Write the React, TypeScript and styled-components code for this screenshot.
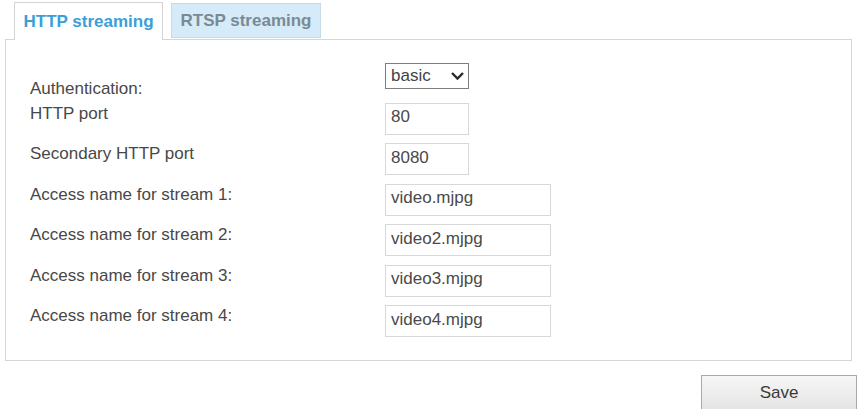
import React from 'react';

import styled, { createGlobalStyle } from 'styled-components';

const GlobalStyle = createGlobalStyle`
  html, body {
    margin: 0;
    padding: 0;
    background: #ffffff;
  }
  body {
    font-family: "Liberation Sans", Arial, sans-serif;
    color: #3a3a3a;
  }
`;

type Field = {
  label: string;
  value: string;
  wide?: boolean;
};

const fields: Field[] = [
  { label: 'HTTP port', value: '80' },
  { label: 'Secondary HTTP port', value: '8080' },
  { label: 'Access name for stream 1:', value: 'video.mjpg', wide: true },
  { label: 'Access name for stream 2:', value: 'video2.mjpg', wide: true },
  { label: 'Access name for stream 3:', value: 'video3.mjpg', wide: true },
  { label: 'Access name for stream 4:', value: 'video4.mjpg', wide: true },
];

const App = () => {
  return (
    <Page>
      <GlobalStyle />
      <TabBar>
        <Tab $active>HTTP streaming</Tab>
        <Tab>RTSP streaming</Tab>
      </TabBar>
      <Panel>
        <Row $first>
          <Label $shift={17}>Authentication:</Label>
          <SelectBox>
            <span>basic</span>
            <Chevron viewBox="0 0 14 10" aria-hidden="true">
              <path d="M1.5 2 L7 7.5 L12.5 2" />
            </Chevron>
          </SelectBox>
        </Row>
        {fields.map((field) => (
          <Row key={field.label}>
            <Label>{field.label}</Label>
            <TextInput readOnly defaultValue={field.value} $wide={field.wide} />
          </Row>
        ))}
      </Panel>
      <Footer>
        <SaveButton type="button">Save</SaveButton>
      </Footer>
    </Page>
  );
};

const Page = styled.div`
  padding: 2px 7px 0 5px;
  width: 859px;
  box-sizing: border-box;
`;

const TabBar = styled.div`
  display: flex;
  align-items: flex-start;
  gap: 8px;
  margin-left: 9px;
  position: relative;
  z-index: 1;
  margin-bottom: -1px;
`;

const Tab = styled.div<{ $active?: boolean }>`
  box-sizing: border-box;
  width: ${(props) => (props.$active ? '149px' : '150px')};
  height: ${(props) => (props.$active ? '38px' : '35px')};
  margin-top: ${(props) => (props.$active ? '0' : '1px')};
  display: flex;
  align-items: center;
  justify-content: center;
  font-size: 17px;
  font-weight: bold;
  color: ${(props) => (props.$active ? '#3a9fd8' : '#7a8a94')};
  background: ${(props) => (props.$active ? '#ffffff' : '#d6ebf9')};
  border: 1px solid ${(props) => (props.$active ? '#d4d4d4' : '#c6dbe8')};
  border-bottom: ${(props) => (props.$active ? 'none' : '1px solid #c6dbe8')};
`;

const Panel = styled.div`
  box-sizing: border-box;
  border: 1px solid #d6d6d6;
  padding: 22px 0 23px 24px;
  height: 322px;
`;

const Row = styled.div<{ $first?: boolean }>`
  display: flex;
  align-items: flex-start;
  height: ${(props) => (props.$first ? '40.5px' : '32px')};
  margin-bottom: ${(props) => (props.$first ? '0' : '8.5px')};
`;

const Label = styled.div<{ $shift?: number }>`
  width: 355px;
  flex-shrink: 0;
  font-size: 17px;
  line-height: 20px;
  margin-top: ${(props) => (props.$shift ?? 1)}px;
  color: #484848;
  white-space: nowrap;
`;

const SelectBox = styled.div`
  box-sizing: border-box;
  width: 84px;
  height: 26px;
  margin-top: 1px;
  border: 1px solid #7e7e7e;
  display: flex;
  align-items: center;
  justify-content: space-between;
  padding: 0 3px 0 5px;
  font-size: 17px;
  color: #444444;
  background: #ffffff;
`;

const Chevron = styled.svg`
  width: 15px;
  height: 10px;
  fill: none;
  stroke: #2a2a2a;
  stroke-width: 2.4;
`;

const TextInput = styled.input<{ $wide?: boolean }>`
  box-sizing: border-box;
  width: ${(props) => (props.$wide ? '166px' : '84px')};
  height: 32px;
  border: 1px solid #d8d8d8;
  padding: 0 0 3px 5px;
  font-family: "Liberation Sans", Arial, sans-serif;
  font-size: 17px;
  color: #4a4a4a;
  background: #ffffff;
  outline: none;
`;

const Footer = styled.div`
  display: flex;
  justify-content: flex-end;
  margin-top: 14px;
  margin-right: -5px;
`;

const SaveButton = styled.button`
  box-sizing: border-box;
  width: 156px;
  height: 36px;
  border: 1px solid #a9a9a9;
  background: linear-gradient(#f6f6f6, #e4e4e4);
  font-family: "Liberation Sans", Arial, sans-serif;
  font-size: 17px;
  color: #3a3a3a;
  padding: 0;
`;

export default App;
